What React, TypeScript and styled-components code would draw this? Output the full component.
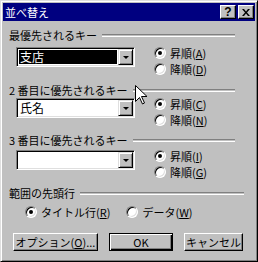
import React from 'react'
import styled, {createGlobalStyle} from 'styled-components'

const GlobalStyle = createGlobalStyle`
	html, body {
		margin: 0;
		padding: 0;
		background: #c0c0c0;
	}
	body {
		font-family: "Noto Sans CJK JP", "Noto Sans", sans-serif;
		font-size: 11px;
		color: #000;
	}
`

const Dialog = styled.div`
	position: relative;
	width: 258px;
	height: 262px;
	box-sizing: border-box;
	background: #c0c0c0;
	border: 1px solid;
	border-color: #dfdfdf #000 #000 #dfdfdf;
	box-shadow: inset 1px 1px 0 #fff, inset -1px -1px 0 #808080;
	padding: 2px;
	display: flex;
	flex-direction: column;
`

const TitleBar = styled.div`
	height: 18px;
	background: #000080;
	display: flex;
	align-items: center;
	padding: 0 1px 0 2px;
	gap: 2px;
`

const Title = styled.div`
	flex: 1;
	color: #fff;
	font-size: 11px;
	line-height: 18px;
`

const CaptionButton = styled.div`
	width: 16px;
	height: 14px;
	box-sizing: border-box;
	background: #c0c0c0;
	border: 1px solid;
	border-color: #fff #000 #000 #fff;
	box-shadow: inset -1px -1px 0 #808080;
	display: flex;
	align-items: center;
	justify-content: center;
	font-family: "Liberation Sans", sans-serif;
	font-weight: bold;
	font-size: 12px;
	line-height: 12px;
`

const Content = styled.div`
	display: flex;
	flex-direction: column;
`

const Header = styled.div<{$top: number; $lineEnd: number}>`
	display: flex;
	align-items: center;
	height: 12px;
	margin-top: ${p => p.$top}px;
	padding-left: 6px;
	padding-right: ${p => p.$lineEnd}px;
	line-height: 12px;
	white-space: nowrap;
`

const Groove = styled.div`
	flex: 1;
	margin-left: 5px;
	height: 1px;
	border-top: 1px solid #808080;
	border-bottom: 1px solid #fff;
	margin-top: 1px;
`

const KeyRow = styled.div<{$top: number}>`
	display: flex;
	align-items: flex-start;
	margin-top: ${p => p.$top}px;
	padding-left: 13px;
	gap: 19px;
`

const Combo = styled.div`
	width: 119px;
	height: 20px;
	margin-top: 2px;
	box-sizing: border-box;
	border: 1px solid;
	border-color: #808080 #fff #fff #808080;
	box-shadow: inset 1px 1px 0 #000, inset -1px -1px 0 #dfdfdf;
	background: #fff;
	padding: 2px;
	display: flex;
`

const Field = styled.div<{$selected?: boolean}>`
	flex: 1;
	background: ${p => (p.$selected ? '#000' : '#fff')};
	color: ${p => (p.$selected ? '#fff' : '#000')};
	font-size: 12px;
	line-height: 14px;
	padding-left: 1px;
	margin: 0 1px 0 0;
`

const DropButton = styled.div`
	width: 15px;
	margin: -1px -1px -1px 0;
	box-sizing: border-box;
	background: #c0c0c0;
	border: 1px solid;
	border-color: #dfdfdf #000 #000 #dfdfdf;
	box-shadow: inset 1px 1px 0 #fff, inset -1px -1px 0 #808080;
	display: flex;
	align-items: center;
	justify-content: center;
`

const Arrow = styled.div`
	width: 0;
	height: 0;
	border-left: 3px solid transparent;
	border-right: 3px solid transparent;
	border-top: 3px solid #000;
	margin-top: 1px;
`

const RadioGroup = styled.div<{$row?: boolean}>`
	display: flex;
	flex-direction: ${p => (p.$row ? 'row' : 'column')};
	gap: ${p => (p.$row ? '16px' : '0')};
`

const RadioItem = styled.div`
	display: flex;
	align-items: center;
	height: 16px;
	gap: 4px;
	white-space: nowrap;
	line-height: 12px;
`

const RadioCircle = styled.div<{$on?: boolean}>`
	position: relative;
	width: 12px;
	height: 12px;
	box-sizing: border-box;
	border-radius: 50%;
	background: #fff;
	border: 1px solid;
	border-color: #808080 #fff #fff #808080;
	box-shadow: inset 1px 1px 0 #000, inset -1px -1px 0 #dfdfdf;
	&::after {
		content: '';
		display: ${p => (p.$on ? 'block' : 'none')};
		position: absolute;
		left: 3px;
		top: 3px;
		width: 4px;
		height: 4px;
		border-radius: 50%;
		background: #000;
	}
`

const RangeRow = styled.div`
	margin-top: 5px;
	padding-left: 22px;
`

const ButtonRow = styled.div`
	display: flex;
	gap: 11px;
	margin-top: 13px;
	padding-left: 10px;
`

const Button = styled.div<{$w: number; $default?: boolean}>`
	width: ${p => p.$w}px;
	height: 18px;
	box-sizing: border-box;
	background: #c0c0c0;
	border: 1px solid;
	border-color: ${p => (p.$default ? '#000' : '#fff #000 #000 #fff')};
	box-shadow: ${p =>
		p.$default
			? 'inset 1px 1px 0 #fff, inset -1px -1px 0 #000, inset -2px -2px 0 #808080'
			: 'inset -1px -1px 0 #808080'};
	display: flex;
	align-items: center;
	justify-content: center;
	line-height: 14px;
	white-space: nowrap;
`

const Cursor = styled.svg`
	position: absolute;
	left: 134px;
	top: 84px;
`

const Radio = ({on, label, k}: {on?: boolean; label: string; k: string}) => (
	<RadioItem>
		<RadioCircle $on={on} />
		<span>
			{label}(<u>{k}</u>)
		</span>
	</RadioItem>
)

const keys = [
	{title: '最優先されるキー', value: '支店', selected: true, top: 8, rowTop: 4, asc: 'A', desc: 'D'},
	{title: '2 番目に優先されるキー', value: '氏名', top: 7, rowTop: 0, asc: 'C', desc: 'N'},
	{title: '3 番目に優先されるキー', value: '', top: 6, rowTop: 2, asc: 'I', desc: 'G'}
]

const App = () => {
	return (
		<>
			<GlobalStyle />
			<Dialog>
				<TitleBar>
					<Title>並べ替え</Title>
					<CaptionButton>?</CaptionButton>
					<CaptionButton>
						<svg width="8" height="7" viewBox="0 0 8 7">
							<path d="M0 0h2l2 2.5L6 0h2L5 3.5 8 7H6L4 4.5 2 7H0l3-3.5z" fill="#000" />
						</svg>
					</CaptionButton>
				</TitleBar>
				<Content>
					{keys.map(key => (
						<React.Fragment key={key.title}>
							<Header $top={key.top} $lineEnd={20}>
								{key.title}
								<Groove />
							</Header>
							<KeyRow $top={key.rowTop}>
								<Combo>
									<Field $selected={key.selected}>{key.value}</Field>
									<DropButton>
										<Arrow />
									</DropButton>
								</Combo>
								<RadioGroup>
									<Radio on label="昇順" k={key.asc} />
									<Radio label="降順" k={key.desc} />
								</RadioGroup>
							</KeyRow>
						</React.Fragment>
					))}
					<Header $top={7} $lineEnd={11}>
						範囲の先頭行
						<Groove />
					</Header>
					<RangeRow>
						<RadioGroup $row>
							<Radio on label="タイトル行" k="R" />
							<Radio label="データ" k="W" />
						</RadioGroup>
					</RangeRow>
					<ButtonRow>
						<Button $w={85}>
							<span>
								オプション(<u>O</u>)...
							</span>
						</Button>
						<Button $w={64} $default>
							OK
						</Button>
						<Button $w={59}>キャンセル</Button>
					</ButtonRow>
				</Content>
				<Cursor width="13" height="20" viewBox="0 0 13 20">
					<path d="M0.5 0.5v16l4-4 3 6.5 2-1-3-6.5h5.5z" fill="#fff" stroke="#000" strokeWidth="1" />
				</Cursor>
			</Dialog>
		</>
	)
}

export default App
